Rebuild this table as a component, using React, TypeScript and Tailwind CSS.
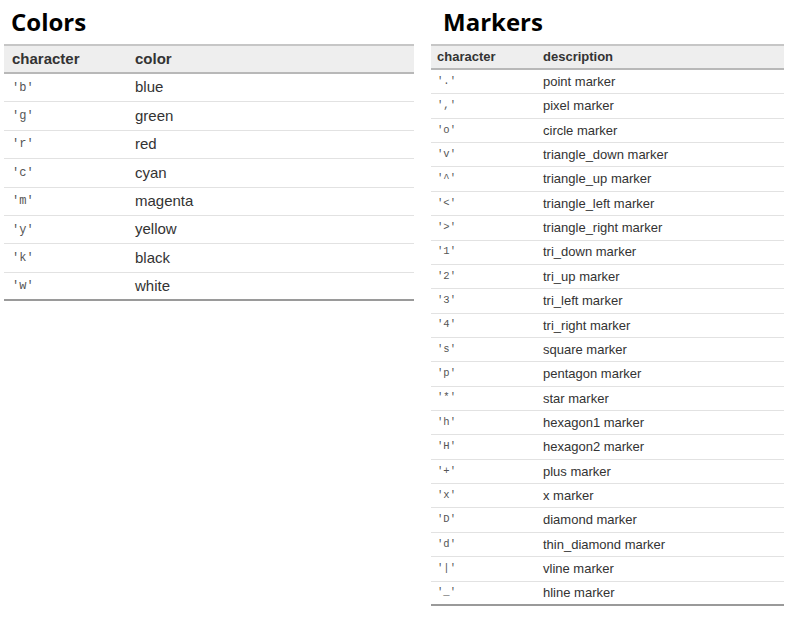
import React from "react";

const colors: [string, string][] = [
  ["b", "blue"],
  ["g", "green"],
  ["r", "red"],
  ["c", "cyan"],
  ["m", "magenta"],
  ["y", "yellow"],
  ["k", "black"],
  ["w", "white"],
];

const markers: [string, string][] = [
  [".", "point marker"],
  [",", "pixel marker"],
  ["o", "circle marker"],
  ["v", "triangle_down marker"],
  ["^", "triangle_up marker"],
  ["<", "triangle_left marker"],
  [">", "triangle_right marker"],
  ["1", "tri_down marker"],
  ["2", "tri_up marker"],
  ["3", "tri_left marker"],
  ["4", "tri_right marker"],
  ["s", "square marker"],
  ["p", "pentagon marker"],
  ["*", "star marker"],
  ["h", "hexagon1 marker"],
  ["H", "hexagon2 marker"],
  ["+", "plus marker"],
  ["x", "x marker"],
  ["D", "diamond marker"],
  ["d", "thin_diamond marker"],
  ["|", "vline marker"],
  ["_", "hline marker"],
];

const title = "font-['Open_Sans',sans-serif] font-bold text-[24px] leading-[30px] text-black";
const sans = "font-['Liberation_Sans',Arial,sans-serif]";
const mono = "font-['Liberation_Mono','DejaVu_Sans_Mono',monospace]";

export default function App() {
  return (
    <div className="w-[799px] h-[627px] bg-white flex">
      <div className="w-[410px] ml-[4px] flex flex-col">
        <div className={`${title} mt-[7px] pl-[7px] h-[30px]`}>Colors</div>
        <div className="mt-[7px]">
          <div className={`${sans} flex items-center h-[30px] bg-[#eeeeee] border-t-2 border-b-2 border-t-[#c6c6c6] border-b-[#b8b8b8] font-bold text-[15px] text-[#333]`}>
            <div className="w-[131px] pl-[8px]">character</div>
            <div>color</div>
          </div>
          {colors.map(([c, n], i) => (
            <div
              key={c}
              className={`flex items-center h-[28.4px] ${
                i === colors.length - 1 ? "border-b-2 border-b-[#9a9a9a]" : "border-b border-b-[#e2e2e2]"
              }`}
            >
              <div className={`${mono} w-[131px] pl-[8px] text-[12px] text-[#555]`}>'{c}'</div>
              <div className={`${sans} text-[15px] text-[#333]`}>{n}</div>
            </div>
          ))}
        </div>
      </div>
      <div className="w-[353px] ml-[17px] flex flex-col">
        <div className={`${title} mt-[7px] pl-[12px] h-[30px]`}>Markers</div>
        <div className="mt-[7px]">
          <div className={`${sans} flex items-center h-[26px] bg-[#eeeeee] border-t-2 border-b-2 border-t-[#c6c6c6] border-b-[#b8b8b8] font-bold text-[13px] text-[#333]`}>
            <div className="w-[112px] pl-[6px]">character</div>
            <div>description</div>
          </div>
          {markers.map(([c, n], i) => (
            <div
              key={c}
              className={`flex items-center h-[24.36px] ${
                i === markers.length - 1 ? "border-b-2 border-b-[#9a9a9a]" : "border-b border-b-[#e2e2e2]"
              }`}
            >
              <div className={`${mono} w-[112px] pl-[6px] text-[10.5px] text-[#555]`}>'{c}'</div>
              <div className={`${sans} text-[13px] text-[#333]`}>{n}</div>
            </div>
          ))}
        </div>
      </div>
    </div>
  );
}
